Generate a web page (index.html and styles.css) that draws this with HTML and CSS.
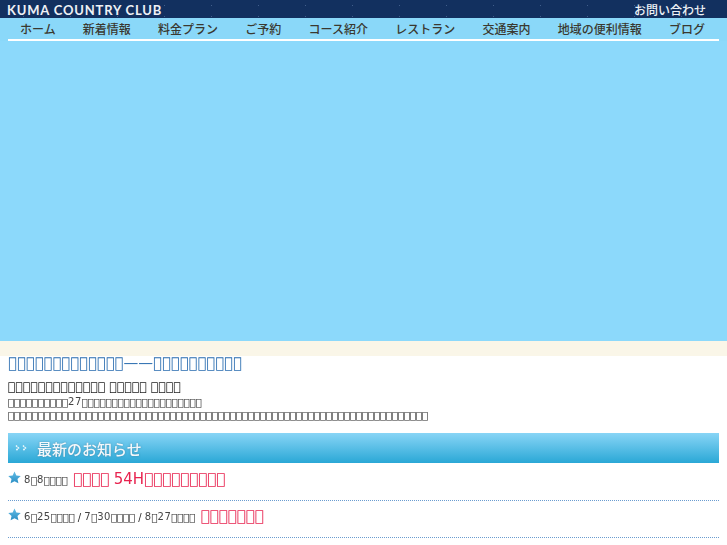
FILE: index.html
```html
<!DOCTYPE html>
<html lang="ja">
<head>
<meta charset="utf-8">
<title>KUMA COUNTRY CLUB</title>
<link rel="stylesheet" href="styles.css">
</head>
<body>
<header class="top">
  <div class="brand-bar">
    <span class="brand">KUMA COUNTRY CLUB</span>
    <a class="contact">お問い合わせ</a>
  </div>
  <nav class="nav">
    <a>ホーム</a><a>新着情報</a><a>料金プラン</a><a>ご予約</a><a>コース紹介</a><a>レストラン</a><a>交通案内</a><a>地域の便利情報</a><a>ブログ</a>
  </nav>
</header>
<div class="hero"></div>
<div class="cream"></div>
<main class="content">
  <h1 class="lead">&#xE000;&#xE000;&#xE000;&#xE000;&#xE000;&#xE000;&#xE000;&#xE000;&#xE000;&#xE000;&#xE000;&#xE000;&#xE000;——&#xE000;&#xE000;&#xE000;&#xE000;&#xE000;&#xE000;&#xE000;&#xE000;&#xE000;&#xE000;</h1>
  <p class="sub">&#xE000;&#xE000;&#xE000;&#xE000;&#xE000;&#xE000;&#xE000;&#xE000;&#xE000;&#xE000;&#xE000;&#xE000;&#xE000; &#xE000;&#xE000;&#xE000;&#xE000;&#xE000; &#xE000;&#xE000;&#xE000;&#xE000;</p>
  <p class="body">&#xE000;&#xE000;&#xE000;&#xE000;&#xE000;&#xE000;&#xE000;&#xE000;&#xE000;&#xE000;<span class="num">27</span>&#xE000;&#xE000;&#xE000;&#xE000;&#xE000;&#xE000;&#xE000;&#xE000;&#xE000;&#xE000;&#xE000;&#xE000;&#xE000;&#xE000;&#xE000;&#xE000;&#xE000;&#xE000;&#xE000;&#xE000;<br>&#xE000;&#xE000;&#xE000;&#xE000;&#xE000;&#xE000;&#xE000;&#xE000;&#xE000;&#xE000;&#xE000;&#xE000;&#xE000;&#xE000;&#xE000;&#xE000;&#xE000;&#xE000;&#xE000;&#xE000;&#xE000;&#xE000;&#xE000;&#xE000;&#xE000;&#xE000;&#xE000;&#xE000;&#xE000;&#xE000;&#xE000;&#xE000;&#xE000;&#xE000;&#xE000;&#xE000;&#xE000;&#xE000;&#xE000;&#xE000;&#xE000;&#xE000;&#xE000;&#xE000;&#xE000;&#xE000;&#xE000;&#xE000;&#xE000;&#xE000;&#xE000;&#xE000;&#xE000;&#xE000;&#xE000;&#xE000;&#xE000;&#xE000;&#xE000;&#xE000;&#xE000;&#xE000;&#xE000;&#xE000;&#xE000;&#xE000;&#xE000;&#xE000;&#xE000;&#xE000;</p>
  <h2 class="band">
    <svg class="chev" viewBox="0 0 12 8"><path d="M1 1.500 3.500 4 1 6.500M8 1.500 10.500 4 8 6.500" fill="none" stroke="#eef9fd" stroke-width="1.500" stroke-dasharray="1.700 .7"/></svg>
    最新のお知らせ
  </h2>
  <div class="news-list">
    <div class="news">
      <svg class="star" viewBox="0 0 24 24"><defs><linearGradient id="s" x1="0" y1="0" x2="0" y2="1"><stop offset="0" stop-color="#62bde6"/><stop offset="1" stop-color="#2a8ec4"/></linearGradient></defs><path fill="url(#s)" d="M12 1l3.400 7.400 8.100.9-6 5.500 1.700 8L12 18.700l-7.200 4.100 1.700-8-6-5.500 8.100-.9z"/></svg>
      <p class="news-text"><span class="date"><span class="num">8</span>&#xE000;<span class="num">8</span>&#xE000;&#xE000;&#xE000;&#xE000;</span> <span class="alert">&#xE000;&#xE000;&#xE000;&#xE000; 54H&#xE000;&#xE000;&#xE000;&#xE000;&#xE000;&#xE000;&#xE000;&#xE000;&#xE000;</span></p>
    </div>
    <div class="news">
      <svg class="star" viewBox="0 0 24 24"><path fill="url(#s)" d="M12 1l3.400 7.400 8.100.9-6 5.500 1.700 8L12 18.700l-7.200 4.100 1.700-8-6-5.500 8.100-.9z"/></svg>
      <p class="news-text"><span class="date"><span class="num">6</span>&#xE000;<span class="num">25</span>&#xE000;&#xE000;&#xE000;&#xE000; / <span class="num">7</span>&#xE000;<span class="num">30</span>&#xE000;&#xE000;&#xE000;&#xE000; / <span class="num">8</span>&#xE000;<span class="num">27</span>&#xE000;&#xE000;&#xE000;&#xE000;</span> <span class="alert">&#xE000;&#xE000;&#xE000;&#xE000;&#xE000;&#xE000;&#xE000;</span></p>
    </div>
  </div>
</main>
</body>
</html>
```
FILE: styles.css
```css
html, body { margin: 0; padding: 0; }
body { background: #fff; color: #000; font-family: "DejaVu Sans", sans-serif; height: 545px; overflow: hidden; }
.brand-bar { height: 18px; background-color: #12305f; background-image: radial-gradient(circle, rgba(150,180,220,.35) .6px, transparent .8px); background-size: 47px 11px; display: flex; align-items: center; justify-content: space-between; padding: 0 21px 0 7px; }
.brand { font-family: Lato, sans-serif; font-weight: 700; font-size: 13px; letter-spacing: .82px; color: #eef1f5; position: relative; top: 1px; }
.contact { font-family: "Noto Sans CJK JP", sans-serif; font-size: 12px; font-weight: 500; color: #eef2f6; }
.nav { box-sizing: border-box; height: 23px; background: #8ad8f9; display: flex; justify-content: space-between; align-items: center; padding: 0 22px 2px 20px; position: relative; }
.nav::after { content: ""; position: absolute; left: 8px; right: 8px; bottom: 0; height: 2px; background: #fff; }
.nav a { font-family: "Noto Sans CJK JP", sans-serif; font-size: 12px; font-weight: 500; color: #3a3830; }
.hero { height: 300px; background: #8cd9fb; }
.cream { height: 15px; background: #faf6e8; }
.content { padding: 0 8px; will-change: transform; }
.lead { margin: 0; font-size: 14.8px; font-weight: 400; line-height: 13px; color: #2a6db0; }
.sub { margin: 10px 0 0; font-size: 12.5px; line-height: 16px; color: #222; }
.body { margin: 1px 0 0; font-size: 10px; line-height: 13px; color: #222; }
.num { letter-spacing: .5px; position: relative; top: -1px; color: #444; }
.band { margin: 11px 0 0; height: 30px; background: linear-gradient(#88d5f6, #2aa8d6); display: flex; align-items: center; font-family: "Noto Sans CJK JP", sans-serif; font-size: 15px; font-weight: 500; color: #f4f8fb; text-shadow: 0 0 2px rgba(60,90,110,.5); }
.chev { width: 12px; height: 8px; margin: 0 10px 0 7px; flex: none; }
.news-list { padding-top: 1px; }
.news { box-sizing: border-box; display: flex; align-items: flex-start; gap: 3px; height: 37px; padding-top: 6px; border-bottom: 1px dotted #6a9cd0; }
.star { width: 13px; height: 13px; flex: none; margin-top: 1px; }
.news-text { margin: 0; line-height: 18px; }
.date { font-size: 10px; color: #222; }
.alert { font-size: 15px; color: #e8234f; }
```
